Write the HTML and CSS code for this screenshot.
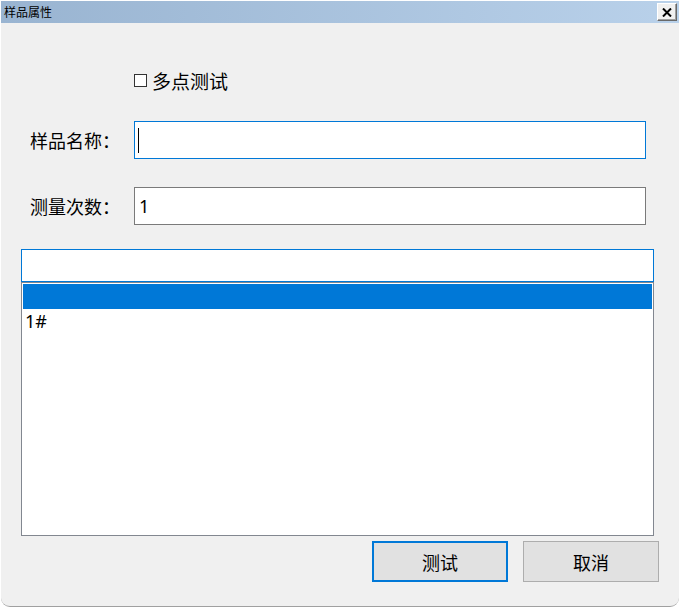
FILE: index.html
```html
<!DOCTYPE html>
<html lang="zh-CN">
<head>
<meta charset="utf-8">
<title>样品属性</title>
<link rel="stylesheet" href="styles.css">
</head>
<body>
<div class="window">
  <div class="titlebar">
    <span class="title">样品属性</span>
    <span class="close"><svg width="10" height="9" viewBox="0 0 10 9"><path d="M1 0.5 L9 8.5 M9 0.5 L1 8.5" stroke="#000" stroke-width="2" fill="none"/></svg></span>
  </div>
  <div class="form">
    <span></span>
    <label class="check"><span class="box"></span><span>多点测试</span></label>
    <span class="label">样品名称：</span>
    <div class="input focus"><span class="caret"></span></div>
    <span class="label">测量次数：</span>
    <div class="input">1</div>
  </div>
  <div class="grid-header"></div>
  <div class="list">
    <div class="row selected"></div>
    <div class="row">1#</div>
  </div>
  <div class="buttons">
    <button class="btn default">测试</button>
    <button class="btn">取消</button>
  </div>
</div>
</body>
</html>
```
FILE: styles.css
```css
* { box-sizing: border-box; }
body {
  margin: 0;
  background: #fff;
  font-family: "Noto Sans", "Noto Sans CJK SC", sans-serif;
  color: #000;
}
.window {
  width: 678px;
  height: 606px;
  margin: 1px 0 0 1px;
  background: #f0f0f0;
  border-bottom: 1px solid #a0a0a0;
  border-radius: 0 0 9px 9px;
  display: flex;
  flex-direction: column;
}
.titlebar {
  height: 22px;
  flex: none;
  background: linear-gradient(to right, #99b4d1, #b9d1ea);
  display: flex;
  align-items: center;
  justify-content: space-between;
  padding: 0 2px 0 3px;
}
.title {
  font-family: "Noto Sans CJK SC", sans-serif;
  font-size: 12px;
  line-height: 14px;
}
.close {
  width: 20px;
  height: 18px;
  background: #f0f0f0;
  border: 1px solid;
  border-color: #fff #696969 #696969 #fff;
  box-shadow: inset -1px -1px 0 #a0a0a0;
  display: flex;
  align-items: center;
  justify-content: center;
}
.form {
  display: grid;
  grid-template-columns: 104px 512px;
  grid-template-rows: 25px 38px 38px;
  row-gap: 28px;
  margin-top: 45px;
  padding-left: 29px;
  font-size: 18px;
}
.label {
  align-self: center;
  font-family: "Noto Sans CJK SC", sans-serif;
  font-size: 18px;
  line-height: 24px;
}
.check {
  display: flex;
  align-items: center;
  gap: 5px;
  font-family: "Noto Sans CJK SC", sans-serif;
  font-size: 19px;
}
.box {
  width: 13px;
  height: 13px;
  border: 1px solid #333;
  background: #fff;
}
.input {
  background: #fff;
  border: 1px solid #7a7a7a;
  display: flex;
  align-items: center;
  padding: 0 4px;
  font-size: 18px;
}
.input.focus { border-color: #0078d7; padding-left: 3px; }
.caret {
  width: 1px;
  height: 25px;
  background: #000;
}
.grid-header {
  margin: 24px 0 0 20px;
  width: 633px;
  height: 33px;
  flex: none;
  background: #fff;
  border: 1px solid #0078d7;
}
.list {
  margin-left: 20px;
  width: 633px;
  height: 254px;
  flex: none;
  background: #fff;
  border: 1px solid #828790;
  padding: 1px;
}
.row {
  height: 25px;
  line-height: 25px;
  padding-left: 2px;
  font-size: 18px;
}
.row.selected { background: #0078d7; }
.buttons {
  display: flex;
  justify-content: flex-end;
  gap: 15px;
  margin-top: 5px;
  padding-right: 20px;
}
.btn {
  width: 136px;
  height: 41px;
  background: #e1e1e1;
  border: 1px solid #adadad;
  font-family: "Noto Sans CJK SC", sans-serif;
  font-size: 18px;
  color: #000;
  padding: 0;
}
.btn.default { border: 2px solid #0078d7; }
```
